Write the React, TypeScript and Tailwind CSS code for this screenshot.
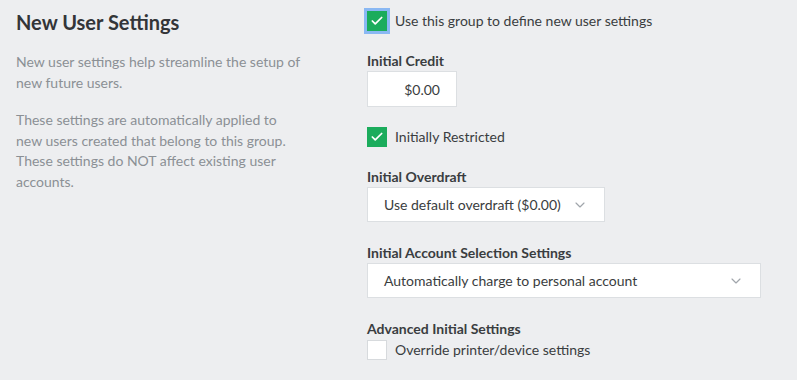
import { Check, ChevronDown } from "lucide-react";

function Box({ checked, focused }: { checked?: boolean; focused?: boolean }) {
  return (
    <span
      className={
        "flex h-5 w-5 shrink-0 items-center justify-center " +
        (checked ? "bg-[#1bac5c] " : "bg-white border border-[#d7dadd] ") +
        (focused ? "ring-[3px] ring-[#8ab8f3]" : "")
      }
    >
      {checked && <Check className="h-3.5 w-3.5 text-white" strokeWidth={3} />}
    </span>
  );
}

function Label({ children }: { children: React.ReactNode }) {
  return <div className="text-[14px] font-bold leading-5 text-[#3a3d40]">{children}</div>;
}

function Select({ text, width }: { text: string; width: string }) {
  return (
    <div className={"flex h-[35px] items-center justify-between border border-[#dcdfe2] bg-white pl-4 pr-4 " + width}>
      <span className="text-[14px] text-[#3a3d40]">{text}</span>
      <ChevronDown className="h-4 w-4 text-[#a0a5ab]" strokeWidth={1.75} />
    </div>
  );
}

export default function App() {
  return (
    <div className="flex h-[380px] w-[797px] bg-[#edeef0] font-['Lato',sans-serif] text-[#3a3d40]">
      <div className="w-[351px] shrink-0 pl-4 pt-[8px]">
        <h1 className="text-[20px] font-bold leading-7 text-[#333538]">New User Settings</h1>
        <div className="w-[288px]">
          <p className="mt-[16px] text-[14px] leading-[20.5px] text-[#8b9095]">
            New user settings help streamline the setup of new future users.
          </p>
          <p className="mt-[17px] text-[14px] leading-[20.5px] text-[#8b9095]">
            These settings are automatically applied to new users created that belong to this group. These
            settings do NOT affect existing user accounts.
          </p>
        </div>
      </div>

      <div className="flex flex-col pl-[16px] pt-[10px]">
        <label className="flex items-center gap-2">
          <Box checked focused />
          <span className="text-[14px]">Use this group to define new user settings</span>
        </label>

        <div className="mt-[20px]">
          <Label>Initial Credit</Label>
          <div className="flex h-[36px] w-[90px] items-center justify-end border border-[#dcdfe2] bg-white pr-4 text-[14px]">
            $0.00
          </div>
        </div>

        <label className="mt-[19px] flex items-center gap-2">
          <Box checked />
          <span className="text-[14px]">Initially Restricted</span>
        </label>

        <div className="mt-[20px]">
          <Label>Initial Overdraft</Label>
          <Select text="Use default overdraft ($0.00)" width="w-[238px]" />
        </div>

        <div className="mt-[21px]">
          <Label>Initial Account Selection Settings</Label>
          <Select text="Automatically charge to personal account" width="w-[394px]" />
        </div>

        <div className="mt-[21px]">
          <Label>Advanced Initial Settings</Label>
          <label className="flex items-center gap-2">
            <Box />
            <span className="text-[14px]">Override printer/device settings</span>
          </label>
        </div>
      </div>
    </div>
  );
}
